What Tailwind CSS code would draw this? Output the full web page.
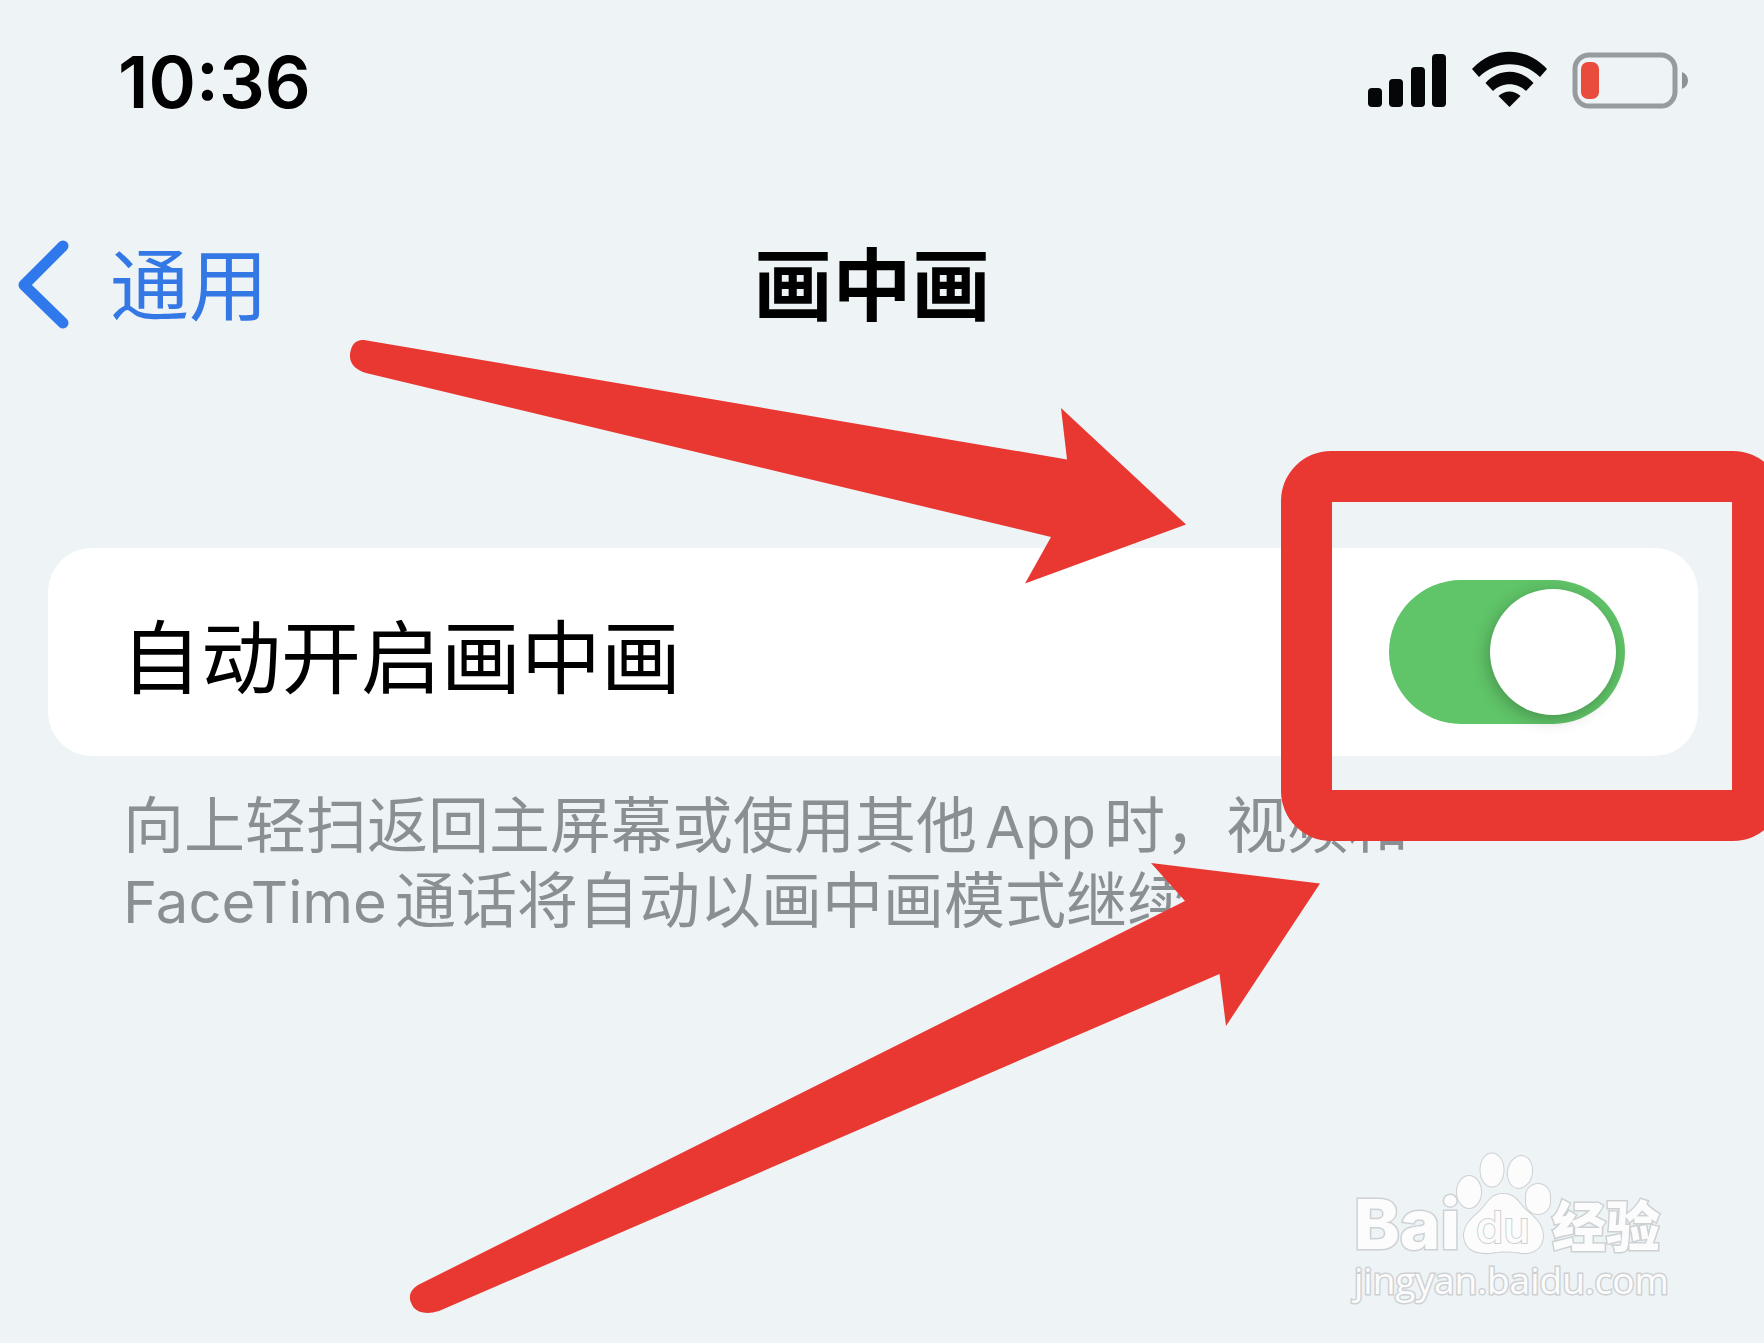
<!DOCTYPE html>
<html lang="zh-CN">
<head>
    <meta charset="UTF-8">
    <meta name="viewport" content="width=device-width, initial-scale=1.0">
    <title>画中画</title>
    <script src="https://cdn.jsdelivr.net/npm/@tailwindcss/browser@4"></script>
</head>
<body class="relative min-h-screen overflow-hidden bg-[#eef3f6] text-black font-['Noto_Sans_CJK_SC',sans-serif]">
    <!-- Status bar -->
    <header class="flex items-center justify-between py-10 pl-[118px] pr-[76px]">
        <time class="text-[72px] leading-[84px] font-semibold font-['Inter',sans-serif]">10:36</time>
        <div class="flex items-center gap-[26px]">
            <svg class="w-[78px] h-14" viewBox="0 0 78 56" fill="#050608" aria-label="Signal">
                <rect x="0" y="34" width="14" height="19" rx="4"/>
                <rect x="21" y="25" width="14" height="28" rx="4"/>
                <rect x="43" y="13" width="14" height="40" rx="4"/>
                <rect x="64" y="0" width="14" height="53" rx="4"/>
            </svg>
            <svg class="w-[75px] h-14 overflow-visible" viewBox="0 0 75 56" fill="#050608" aria-label="Wi-Fi">
                <path d="M0 15C21-8 54-8 75 15L68 23C51 6 24 6 7 23Z"/>
                <path d="M13.500 29C27 14 48 14 61.500 29L54 37C45 28 30 28 21 37Z"/>
                <path d="M26.500 42C33 36 42 36 48.500 42L37.500 53Z"/>
            </svg>
            <svg class="w-[115px] h-14 overflow-visible" viewBox="0 0 115 56" aria-label="Battery">
                <rect x="2" y="1" width="100" height="51" rx="14" fill="none" stroke="#969b9e" stroke-width="5"/>
                <rect x="8" y="8" width="18" height="37" rx="7" fill="#e94b3c"/>
                <path d="M109 18C117 21 117 32 109 35Z" fill="#8d9295"/>
            </svg>
        </div>
    </header>

    <!-- Navigation -->
    <nav class="grid grid-cols-[1fr_auto_1fr] items-center pt-[77px] pl-4 pr-9 text-[79px] leading-[80px]">
        <a href="#general" class="flex h-20 items-center gap-10 text-[#3478e5]">
            <svg class="w-[54px] h-[96px]" viewBox="0 0 54 96" fill="none" stroke="#3079ec" stroke-width="11" stroke-linecap="round" stroke-linejoin="round">
                <path d="M47 13L8 52L47 90"/>
            </svg>
            通用
        </a>
        <h1 class="font-bold">画中画</h1>
    </nav>

    <main class="mt-[227px] ml-12 mr-[66px]">
        <div class="flex h-[208px] items-center justify-between rounded-[44px] bg-white px-[73px]">
            <label for="autoPip" class="text-[80px] leading-[80px]">自动开启画中画</label>
            <div class="relative flex">
                <input type="checkbox" role="switch" id="autoPip" checked class="h-36 w-[236px] appearance-none rounded-full bg-zinc-200 p-[9px] checked:bg-[#60c468] before:block before:size-[126px] before:rounded-full before:bg-white before:shadow-[-2px_4px_16px_rgb(0_0_0/0.25)] checked:before:ml-[92px]">
                <!-- Highlight frame round the switch -->
                <div class="pointer-events-none absolute z-10 -left-[108px] -right-[158px] -top-[129px] -bottom-[117px] rounded-[50px] border-[51px] border-[#e93731]"></div>
            </div>
        </div>
        <p class="mt-[33px] px-[75px] text-[61px] leading-[74px] whitespace-nowrap text-[#8a8f92] font-['Inter','Noto_Sans_CJK_SC',sans-serif]">
            向上轻扫返回主屏幕或使用其他<span class="mx-2 text-[58px]">App</span>时，视频和<br><span class="mr-2 text-[58px]">FaceTime</span>通话将自动以画中画模式继续。
        </p>
    </main>

    <!-- Arrows pointing at the switch -->
    <svg class="pointer-events-none absolute left-0 top-0 w-[1764px] h-[1343px]" viewBox="0 0 1764 1343" fill="#e93731">
        <path d="M364 340L1067 459.500L1061 408L1186 524.500L1025 583.500L1051 537L366 373Q349 368 350 354Q352 339 364 340Z"/>
        <path d="M418 1285L1185 901L1151 863L1320 883.500L1226 1026L1219.500 974L439 1311Q422 1316 414 1308Q404 1294 418 1285Z"/>
    </svg>

    <!-- Watermark -->
    <footer class="absolute left-[1354px] top-[1153px] text-[#fcfcfc] [paint-order:stroke_fill] [-webkit-text-stroke:3px_#cdd1d4]">
        <div class="flex h-[102px] items-end">
            <span class="text-[69px] leading-[62px] font-extrabold font-['Inter',sans-serif]">Bai</span>
            <svg class="w-[96px] h-[104px] -ml-1" viewBox="0 0 96 104" fill="#fcfcfc" stroke="#cdd1d4" stroke-width="2">
                <ellipse cx="13" cy="41" rx="12" ry="16"/>
                <ellipse cx="36" cy="19" rx="11.500" ry="16.500"/>
                <ellipse cx="64" cy="21" rx="12" ry="16" transform="rotate(10 64 21)"/>
                <rect x="70" y="33" width="24" height="30" rx="12"/>
                <path d="M47 43C61 43 63 54 72 61C82 69 87 76 87 86C86 98 76 103 66 102C54 100 44 100 34 102C19 103 9 98 8 85C8 75 14 69 23 61C32 53 34 43 47 43Z"/>
                <text x="20" y="92" font-family="Inter, sans-serif" font-size="44" font-weight="500" class="[-webkit-text-stroke:5px_#c3c8cc]">du</text>
            </svg>
            <span class="text-[54px] leading-[62px] font-black">经验</span>
        </div>
        <div class="text-[37px] leading-[50px] font-['Open_Sans',sans-serif]">jingyan.baidu.com</div>
    </footer>
</body>
</html>
